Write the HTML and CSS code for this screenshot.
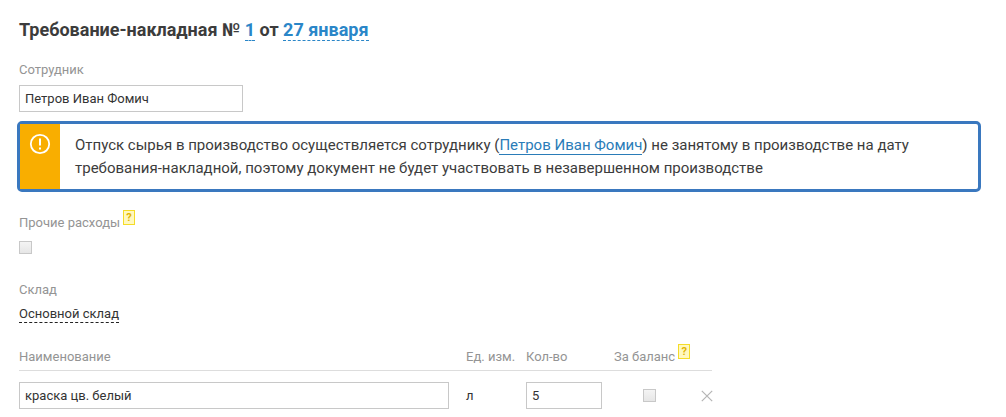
FILE: index.html
```html
<!DOCTYPE html>
<html lang="ru">
<head>
<meta charset="utf-8">
<title>Требование-накладная</title>
<link rel="stylesheet" href="styles.css">
</head>
<body>
<main class="page">
  <h1 class="title">Требование-накладная № <span class="dash-link">1</span> от <span class="dash-link">27 января</span></h1>

  <div class="label employee-label">Сотрудник</div>
  <div class="input employee-input">Петров Иван Фомич</div>

  <div class="alert">
    <div class="alert-side">
      <svg class="alert-icon" width="22" height="22" viewBox="0 0 22 22" fill="none">
        <circle cx="11" cy="11" r="9.2" stroke="#fff" stroke-width="1.8"/>
        <path d="M11 5.6v7" stroke="#fff" stroke-width="2"/>
        <path d="M11 14.4v2" stroke="#fff" stroke-width="2"/>
      </svg>
    </div>
    <p class="alert-text">Отпуск сырья в производство осуществляется сотруднику (<a class="alert-link">Петров Иван Фомич</a>) не занятому в производстве на дату требования-накладной, поэтому документ не будет участвовать в незавершенном производстве</p>
  </div>

  <div class="label other-label">Прочие расходы <span class="hint">?</span></div>
  <div class="checkbox"></div>

  <div class="label store-label">Склад</div>
  <div class="store-row"><span class="store-link">Основной склад</span></div>

  <div class="table">
    <div class="thead">
      <div class="label col-name">Наименование</div>
      <div class="label col-unit">Ед. изм.</div>
      <div class="label col-qty">Кол-во</div>
      <div class="label col-bal">За баланс <span class="hint">?</span></div>
    </div>
    <div class="trow">
      <div class="col-name"><div class="input name-input">краска цв. белый</div></div>
      <div class="col-unit unit-value">л</div>
      <div class="col-qty"><div class="input qty-input">5</div></div>
      <div class="col-bal bal-cell"><div class="checkbox"></div></div>
      <svg class="remove" width="12" height="12" viewBox="0 0 12 12" fill="none"><path d="M.8.8l10.4 10.4M11.2.8L.8 11.2" stroke="#b5b5b5" stroke-width="1.2"/></svg>
    </div>
  </div>
</main>
</body>
</html>
```
FILE: styles.css
```css
* { box-sizing: border-box; }
html, body { margin: 0; padding: 0; background: #fff; }
body { font-family: Roboto, "Noto Sans", sans-serif; color: #333; height: 417px; overflow: hidden; }
.page { padding: 18px 25px 0 19px; }
.title { margin: 0; font-size: 18px; line-height: 24px; font-weight: 700; color: #3c3c3c; }
.dash-link { color: #2a86c8; border-bottom: 1px dashed #2a86c8; display: inline-block; line-height: 21px; }
.label { font-size: 13px; line-height: 16px; color: #949494; }
.employee-label { margin-top: 20px; }
.input { border: 1px solid #c8c8c8; height: 27px; font-size: 13px; line-height: 25px; padding: 0 5px; color: #333; background: #fff; }
.employee-input { margin-top: 7px; width: 224px; }
.alert { display: flex; margin: 9px 0 0 -2px; width: 964px; height: 71px; border: 3px solid #3a78bf; border-radius: 5px; }
.alert-side { width: 40px; flex: none; background: #f9ae00; display: flex; justify-content: center; align-items: flex-start; padding-top: 9px; }
.alert-text { margin: 0; padding: 10px 20px 0 15px; font-size: 15px; line-height: 23px; color: #3c3c3c; }
.alert-link { color: #2a7cb8; border-bottom: 1px solid #2a7cb8; }
.other-label { margin-top: 17px; height: 22px; display: flex; gap: 3px; align-items: flex-end; }
.hint { display: inline-block; width: 12px; height: 15px; margin-bottom: 6px; border: 1px solid #f5dc28; background: #fff8bf; color: #e2b400; font-size: 11px; font-weight: 700; line-height: 13px; text-align: center; }
.checkbox { width: 13px; height: 13px; border: 1px solid #c8c8c8; background: linear-gradient(#f4f4f4, #e6e6e6); }
.other-label + .checkbox { margin-top: 10px; }
.store-label { margin-top: 28px; }
.store-row { margin-top: 7px; font-size: 13px; line-height: 16px; }
.store-link { color: #333; border-bottom: 1px dashed #222; display: inline-block; line-height: 17px; }
.table { margin-top: 25px; width: 693px; }
.thead { display: flex; align-items: flex-end; height: 23px; border-bottom: 1px solid #ddd; padding-bottom: 5px; }
.trow { display: flex; align-items: center; margin-top: 11px; position: relative; }
.col-name { width: 447px; flex: none; }
.col-unit { width: 60px; flex: none; }
.col-qty { width: 88px; flex: none; }
.col-bal { flex: none; width: 98px; display: flex; gap: 3px; align-items: flex-end; }
.name-input { width: 430px; }
.qty-input { width: 76px; }
.unit-value { font-size: 13px; }
.bal-cell { justify-content: flex-start; padding-left: 29px; }
.remove { position: absolute; left: 682px; top: 8px; }
```
